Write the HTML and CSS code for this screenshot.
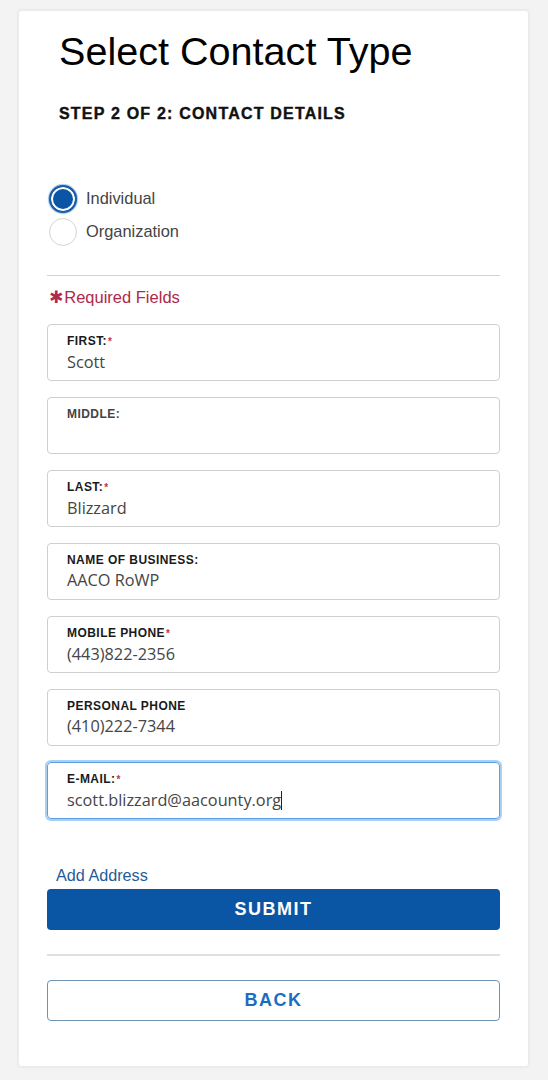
FILE: index.html
```html
<!DOCTYPE html>
<html>
<head>
<meta charset="utf-8">
<link rel="stylesheet" href="styles.css">
</head>
<body>
<div class="card">
  <h1 class="title">Select Contact Type</h1>
  <div class="step">STEP 2 OF 2: CONTACT DETAILS</div>
  <div class="radios">
    <div class="radio-row"><span class="radio checked"></span><span class="radio-label">Individual</span></div>
    <div class="radio-row"><span class="radio"></span><span class="radio-label">Organization</span></div>
  </div>
  <div class="divider"></div>
  <div class="required"><span class="req-star">✱</span>Required Fields</div>
  <div class="fields">
    <div class="field"><div class="label">FIRST:<span class="ast">*</span></div><div class="value">Scott</div></div>
    <div class="field"><div class="label muted">MIDDLE:</div><div class="value"></div></div>
    <div class="field"><div class="label">LAST:<span class="ast">*</span></div><div class="value">Blizzard</div></div>
    <div class="field"><div class="label">NAME OF BUSINESS:</div><div class="value">AACO RoWP</div></div>
    <div class="field"><div class="label">MOBILE PHONE<span class="ast">*</span></div><div class="value">(443)822-2356</div></div>
    <div class="field"><div class="label">PERSONAL PHONE</div><div class="value">(410)222-7344</div></div>
    <div class="field focused"><div class="label">E-MAIL:<span class="ast">*</span></div><div class="value">scott.blizzard@aacounty.org<span class="caret"></span></div></div>
  </div>
  <div class="add-address">Add Address</div>
  <div class="btn submit">SUBMIT</div>
  <div class="divider2"></div>
  <div class="btn back">BACK</div>
</div>
</body>
</html>
```
FILE: styles.css
```css
html, body {
  margin: 0;
  padding: 0;
  background: #f3f3f3;
}
body {
  font-family: "Liberation Sans", Arial, sans-serif;
  padding-top: 10px;
  height: 1080px;
  box-sizing: border-box;
}
.card {
  margin: 0 19px 0 18px;
  background: #fff;
  border: 1px solid #ebebeb;
  box-shadow: 0 0 3px rgba(0,0,0,0.08);
  border-radius: 3px;
  padding: 18px 28px 44px 28px;
  box-sizing: border-box;
  height: 1057px;
}
.title {
  margin: 0 0 0 12px;
  font-weight: normal;
  font-size: 39.6px;
  line-height: 45px;
  color: #000;
}
.step {
  margin: 31px 0 0 12px;
  font-size: 16px;
  line-height: 18px;
  font-weight: bold;
  letter-spacing: 1.2px;
  color: #111;
  -webkit-text-stroke: 0.4px #111;
}
.radios {
  margin-top: 59px;
  display: flex;
  flex-direction: column;
}
.radio-row {
  display: flex;
  align-items: center;
  height: 33px;
}
.radio {
  width: 28px;
  height: 28px;
  box-sizing: border-box;
  border-radius: 50%;
  border: 1px solid #d4d4d4;
  background: #fff;
  margin-left: 2px;
  margin-right: 9px;
}
.radio.checked {
  border: 2px solid #1a5ca6;
  background: #0b55a6;
  box-shadow: inset 0 0 0 2px #fff, 0 0 1px 1px #9cc3ea;
}
.radio-label {
  font-size: 16.4px;
  color: #444;
}
.divider {
  margin-top: 27px;
  height: 1px;
  background: #c8d5de;
}
.required {
  margin-top: 12px;
  margin-left: 2px;
  font-size: 16.5px;
  line-height: 18px;
  color: #b0284a;
  display: flex;
  align-items: center;
}
.req-star {
  font-family: "DejaVu Sans", sans-serif;
  font-size: 17px;
  margin-right: 1px;
  font-weight: bold;
}
.fields {
  margin-top: 18px;
  display: flex;
  flex-direction: column;
  gap: 16px;
}
.field {
  border: 1px solid #cfcfcf;
  border-radius: 4px;
  padding: 9px 19px 8px 19px;
  height: 57px;
  box-sizing: border-box;
}
.field.focused {
  border: 1px solid #5c9fe0;
  box-shadow: 0 0 0 2px #a8d0f2;
}
.label {
  font-size: 12px;
  line-height: 14px;
  font-weight: bold;
  letter-spacing: 0.45px;
  color: #1a1a1a;
}
.label.muted {
  color: #444;
}
.ast {
  color: #c0305a;
  font-size: 10px;
  margin-left: 1px;
}
.value {
  margin-top: 2px;
  font-family: "Open Sans", sans-serif;
  font-size: 16.3px;
  line-height: 22px;
  height: 22px;
  color: #454545;
}
.caret {
  display: inline-block;
  width: 1px;
  height: 19px;
  background: #222;
  vertical-align: -4px;
}
.add-address {
  margin-top: 47px;
  margin-left: 9px;
  font-size: 16.2px;
  line-height: 18px;
  color: #1f5c97;
}
.btn {
  margin-top: 5px;
  height: 41px;
  box-sizing: border-box;
  border-radius: 4px;
  display: flex;
  align-items: center;
  justify-content: center;
  font-size: 18px;
  font-weight: bold;
  letter-spacing: 1.5px;
}
.submit {
  background: #0b55a5;
  color: #fff;
}
.divider2 {
  margin-top: 24px;
  height: 2px;
  background: #dde1e4;
}
.back {
  margin-top: 24px;
  border: 1px solid #6f93b3;
  color: #1b6dbf;
  background: #fff;
}
```
